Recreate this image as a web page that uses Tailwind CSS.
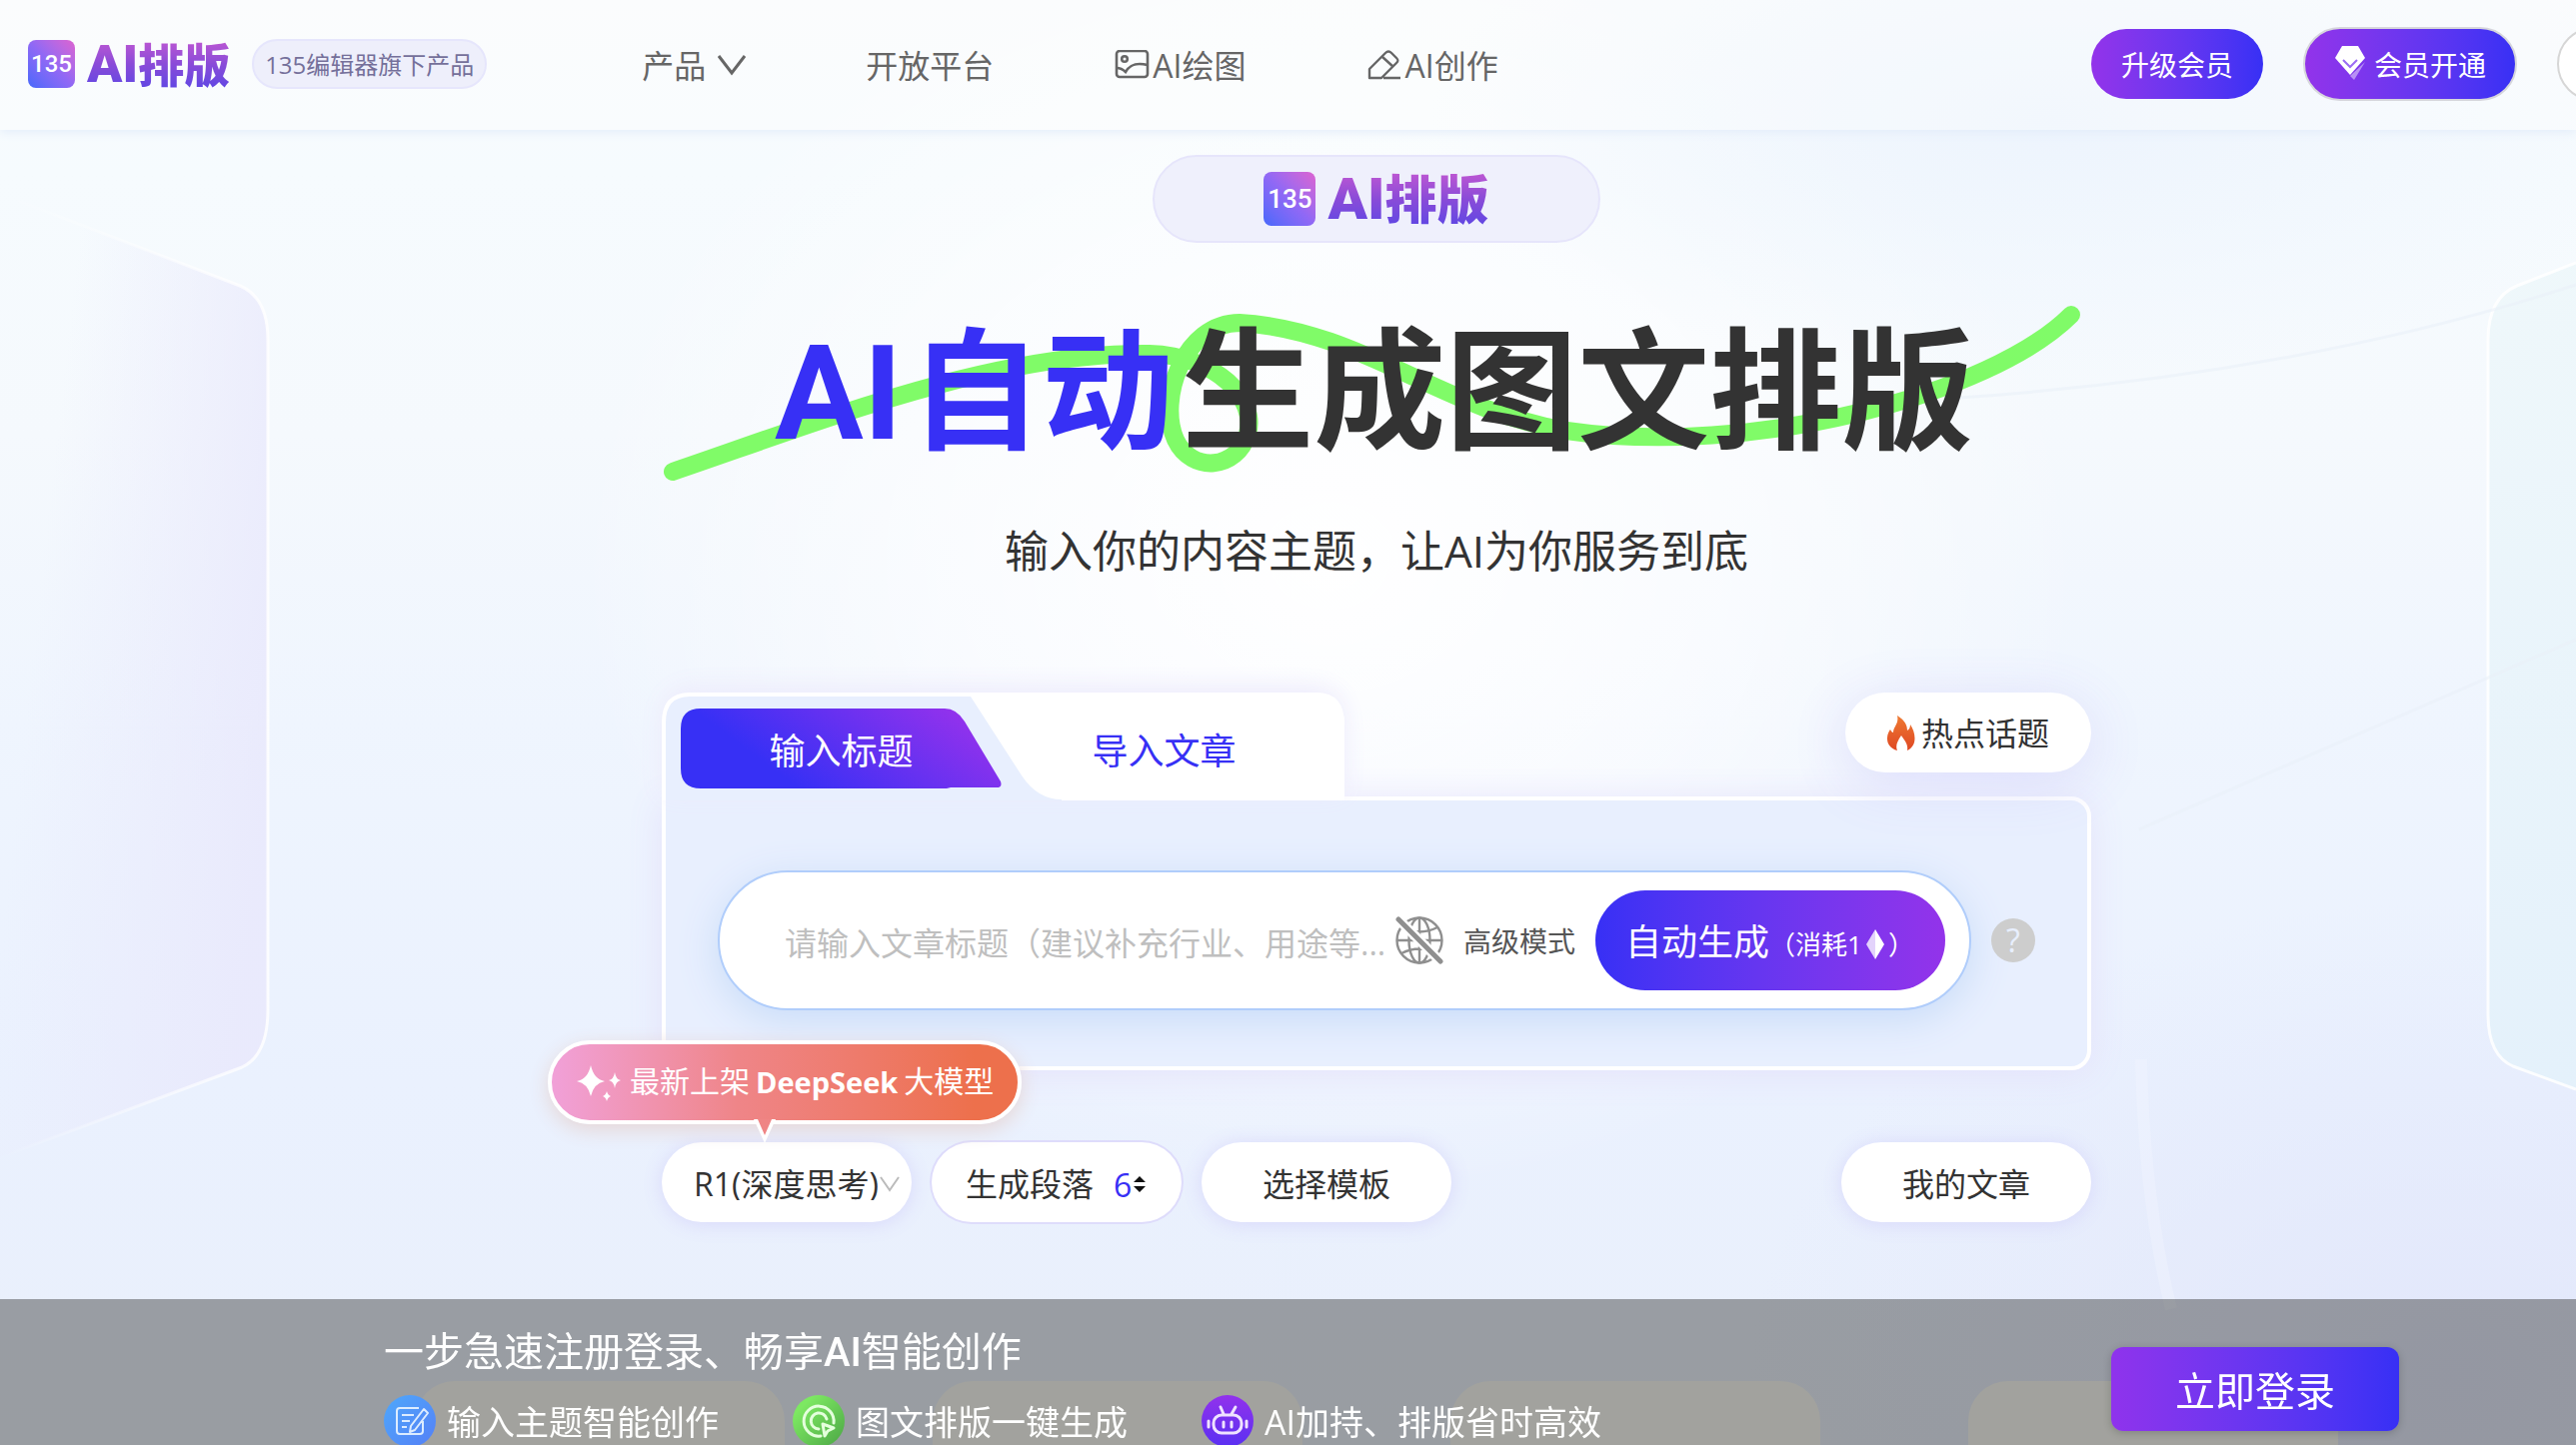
<!DOCTYPE html>
<html lang="zh-CN">
<head>
<meta charset="utf-8">
<meta name="viewport" content="width=device-width, initial-scale=1">
<title>135 AI排版</title>
<script src="https://cdn.jsdelivr.net/npm/@tailwindcss/browser@4"></script>
</head>
<body class="relative h-screen overflow-hidden bg-[#f3f8fe] font-['Open_Sans','Noto_Sans_CJK_SC',sans-serif] text-[#333333]">

<!-- page backdrop -->
<svg class="absolute inset-0 -z-10 h-full w-full" viewBox="0 0 2577 1446" preserveAspectRatio="none" fill="none" aria-hidden="true">
  <defs>
    <linearGradient id="sky" x1="0" y1="0" x2="0" y2="1"><stop offset="0" stop-color="#f9fbfd"/><stop offset=".12" stop-color="#f6fbfe"/><stop offset=".3" stop-color="#f5f9fd"/><stop offset=".5" stop-color="#eff5fe"/><stop offset=".75" stop-color="#eaf1fe"/><stop offset="1" stop-color="#e9effb"/></linearGradient>
    <radialGradient id="glow" gradientUnits="userSpaceOnUse" cx="0" cy="0" r="1" gradientTransform="translate(1330 560) scale(760 640)"><stop offset="0" stop-color="#fff"/><stop offset=".5" stop-color="#fff" stop-opacity=".6"/><stop offset="1" stop-color="#fff" stop-opacity="0"/></radialGradient>
    <radialGradient id="dusk" gradientUnits="userSpaceOnUse" cx="0" cy="0" r="1" gradientTransform="translate(2450 1380) scale(700 480)"><stop offset="0" stop-color="#e2e7fb"/><stop offset="1" stop-color="#e2e7fb" stop-opacity="0"/></radialGradient>
    <radialGradient id="haze" gradientUnits="userSpaceOnUse" cx="0" cy="0" r="1" gradientTransform="translate(2050 120) scale(620 260)"><stop offset="0" stop-color="#edf4fd"/><stop offset="1" stop-color="#edf4fd" stop-opacity="0"/></radialGradient>
    <linearGradient id="paneL" x1="0" y1=".2" x2="1" y2=".6"><stop offset=".2" stop-color="#e9e9fc" stop-opacity="0"/><stop offset="1" stop-color="#e9e9fc" stop-opacity=".9"/></linearGradient>
    <linearGradient id="paneR" x1="0" y1="0" x2="0" y2="1"><stop offset="0" stop-color="#edf7fa" stop-opacity=".8"/><stop offset="1" stop-color="#e4f1fb"/></linearGradient>
    <linearGradient id="edgeL" x1="0" y1="0" x2="1" y2="0"><stop offset="0" stop-color="#fff" stop-opacity="0"/><stop offset="1" stop-color="#fff" stop-opacity=".85"/></linearGradient>
  </defs>
  <path fill="url(#sky)" d="M0 0h2577v1446H0z"/>
  <path fill="url(#glow)" d="M0 0h2577v1446H0z"/>
  <path fill="url(#haze)" d="M1400 0h1177v500H1400z"/>
  <path fill="url(#dusk)" d="M1600 800h977v646H1600z"/>
  <path d="M0 194 240 286Q268 298 268 340V1010Q268 1056 242 1068L0 1158" fill="url(#paneL)" stroke="url(#edgeL)" stroke-width="3"/>
  <path d="M2577 263 2518 286Q2489 298 2489 340V1015Q2489 1056 2514 1067L2577 1090" fill="url(#paneR)" stroke="#fff" stroke-opacity=".85" stroke-width="3"/>
  <path d="M1960 398Q2300 375 2577 285M2140 830 2577 640" stroke="#eaf0f8" stroke-opacity=".6" stroke-width="3"/>
  <path d="M2142 1060Q2145 1200 2172 1310" stroke="#f4f7fe" stroke-opacity=".35" stroke-width="12"/>
</svg>

<header class="flex h-[130px] items-center overflow-hidden bg-white/30 pb-0.5 pl-7 shadow-[0_2px_10px_#e2ecfa]">
  <a href="#" class="flex items-center gap-3" aria-label="135 AI排版">
    <span class="flex h-12 w-[47px] items-center justify-center rounded-lg bg-linear-to-tr from-[#4568fb] via-[#9068f5] to-[#dd62d0] font-['Roboto'] text-2xl leading-none font-medium text-white">135</span>
    <span class="block bg-linear-to-b from-[#cf58d0] via-[#8a4bd8] to-[#5243e6] bg-clip-text pb-1 font-['Noto_Sans_CJK_SC',sans-serif] text-[46px] leading-[60px] font-black whitespace-nowrap text-transparent"><span class="font-['Roboto'] text-[52px] leading-none">AI</span>排版</span>
  </a>
  <span class="ml-[22px] flex h-[50px] items-center rounded-full border-2 border-[#e6e6fc] bg-[#eeeffb] px-[11px] pt-0.5 text-2xl leading-none whitespace-nowrap text-[#75709a]">135编辑器旗下产品</span>
  <nav class="ml-[155px] flex items-center gap-[120px] pt-1 text-[32px] leading-none whitespace-nowrap text-[#666666]">
    <a href="#" class="flex items-center gap-3">产品
      <svg class="h-7 w-7" viewBox="0 0 28 28" fill="none" stroke="currentColor" stroke-width="3"><path d="M1 4l13 17L27 4"/></svg></a>
    <a href="#">开放平台</a>
    <a href="#" class="flex items-center gap-[3px]">
      <svg class="h-8 w-9" viewBox="0 0 36 32" fill="none" stroke="currentColor" stroke-width="2.6"><rect x="3" y="1" width="31" height="26" rx="3"/><circle cx="11" cy="9" r="2.8"/><path d="M3 18c4 0 6 1 9 4 4-7 10-10 22-7"/></svg>AI绘图</a>
    <a href="#" class="flex items-center gap-[3px]">
      <svg class="h-8 w-9" viewBox="0 0 36 32" fill="none" stroke="currentColor" stroke-width="2.4" stroke-linejoin="round"><path d="M3 28v-9L19 3c2-2 4-2 6 0l5 5c2 2 2 3 0 5L15 28zM17 28h17M16 7l11 10"/></svg>AI创作</a>
  </nav>
  <div class="ml-auto -mr-[55px] flex shrink-0 items-center gap-10 text-[28px] leading-none whitespace-nowrap text-white">
    <button class="h-[70px] w-[172px] rounded-full bg-linear-to-r from-[#9333ea] to-[#3730f5] pt-0.5">升级会员</button>
    <button class="flex h-[74px] w-[214px] items-center justify-center gap-2 rounded-full border-2 border-[#d6d6dc] bg-linear-to-r from-[#9333ea] to-[#3730f5] bg-origin-border">
      <svg class="h-9 w-8" viewBox="0 0 32 36"><path d="M31 16 20 34l-4-4z" fill="#fff" opacity=".45"/><path d="M8 0h16l7 12-15 17L1 12z" fill="#fff"/><path d="M9 14l7 7 7-7" fill="none" stroke="#9b6bf3" stroke-width="2"/></svg><span class="pt-0.5">会员开通</span></button>
    <button class="h-[74px] w-[74px] rounded-full border-2 border-[#d6d6d6] bg-white" aria-label="用户"></button>
  </div>
</header>

<main class="flex flex-col items-center pt-[25px] pl-[177px]">
  <div class="flex h-[88px] w-[448px] items-center justify-center gap-3 rounded-full border-2 border-[#e6e5fb] bg-[#eff0fc]">
    <span class="flex h-[54px] w-[52px] items-center justify-center rounded-lg bg-linear-to-tr from-[#4568fb] via-[#9068f5] to-[#dd62d0] font-['Roboto'] text-[26px] leading-none font-medium text-white">135</span>
    <span class="block bg-linear-to-b from-[#cf58d0] via-[#8a4bd8] to-[#5243e6] bg-clip-text pb-1 font-['Noto_Sans_CJK_SC',sans-serif] text-[52px] leading-[66px] font-black whitespace-nowrap text-transparent"><span class="font-['Roboto'] text-[58px] leading-none">AI</span>排版</span>
  </div>

  <div class="relative mt-[79px] h-[132px] w-[1430px]">
    <svg class="absolute -top-8 left-0 h-[200px] w-[1430px]" viewBox="0 0 1430 200" fill="none" stroke="#80fb68" stroke-width="18" stroke-linecap="round" aria-hidden="true"><path d="M11 182C150 135 330 62 488 64C556 66 596 110 586 144C576 180 530 184 514 150C496 110 522 33 578 33C700 40 780 120 905 141C1090 168 1330 105 1410 25"/></svg>
    <h1 class="relative pl-[113px] text-[132px] leading-none font-bold whitespace-nowrap"><span class="text-[#3730f5]"><span class="mr-2 font-['Roboto']">AI</span>自动</span><span class="ml-2">生成图文排版</span></h1>
  </div>
  <p class="mt-[75px] text-[44px] leading-none">输入你的内容主题，让AI为你服务到底</p>

  <section class="mt-[120px] w-[1430px]">
    <div class="relative z-10 -mb-1 flex h-[108px] items-start justify-between">
      <div class="relative flex h-[108px] w-[683px] rounded-t-[30px] pt-4 pl-[19px] shadow-[0_-6px_24px_#edebfc]" role="tablist">
        <svg class="absolute inset-0 h-full w-full" viewBox="0 0 683 108" aria-hidden="true"><path fill="#fff" d="M0 108V30Q0 0 28 0H655Q683 0 683 32V108z"/><path fill="#e8effe" d="M4 108V30Q4 4 28 4H309L360 83Q376 107 400 107V108z"/></svg>
        <button role="tab" aria-selected="true" class="relative h-20 w-[321px] pt-1.5 text-4xl leading-none text-white">
          <svg class="absolute inset-0 h-full w-full" viewBox="0 0 321 80" aria-hidden="true"><defs><linearGradient id="tab" x1=".05" y1=".5" x2=".95" y2=".2"><stop offset=".15" stop-color="#3730f5"/><stop offset="1" stop-color="#9632ec"/></linearGradient></defs><path fill="url(#tab)" d="M20 0H264Q276 0 284 13L320 73Q322 79 316 79H270L266 80H20Q0 80 0 60V20Q0 0 20 0z"/></svg>
          <span class="relative">输入标题</span>
        </button>
        <button role="tab" aria-selected="false" class="relative h-20 w-[325px] pt-1.5 text-4xl leading-none text-[#3730f5]">导入文章</button>
      </div>
      <button class="flex h-20 w-[246px] items-center justify-center gap-1.5 rounded-full bg-white pt-0.5 text-[32px] leading-none shadow-[0_10px_60px_#dcdcfb]">
        <svg class="h-9 w-7" viewBox="0 0 28 36"><defs><linearGradient id="fire" x1="0" y1="0" x2="0" y2="1"><stop stop-color="#ee7a32"/><stop offset="1" stop-color="#df4823"/></linearGradient></defs><path fill="url(#fire)" d="M10 0C18 5 20 10 20 15c2-1 3-3 3-6 5 7 8 21-3 26 1-6-2-9-6-15-4 6-6 10-4 15C-3 31-1 19 3 14c1 2 2 3 3 3C6 11 12 8 10 0z"/></svg>热点话题</button>
    </div>

    <div class="flex items-center gap-5 rounded-[20px] rounded-tl-none border-4 border-white bg-[#e8effe] px-[52px] pt-[70px] pb-14 shadow-[0_4px_36px_#e4e2fb]">
      <form class="flex h-[140px] flex-1 items-center gap-5 rounded-full border-2 border-[#b0cdfb] bg-white pr-[24px] pl-[65px] shadow-[0_10px_40px_#c8dcf8]">
        <input type="text" aria-label="文章标题" placeholder="请输入文章标题（建议补充行业、用途等..." class="h-20 min-w-0 flex-1 pt-1 text-[32px] outline-none placeholder:text-[#bfbfbf]">
        <button type="button" class="-ml-2.5 flex items-center gap-5 text-[28px] leading-none whitespace-nowrap text-[#555555]">
          <svg class="h-12 w-12" viewBox="0 0 48 48" fill="none" stroke="#8f8f8f" stroke-width="2.4"><circle cx="24" cy="24" r="22.5"/><ellipse cx="24" cy="24" rx="10.5" ry="22.5"/><path d="M24 1v46M1 24h46M6 11q18 9 36 0M6 37q18-9 36 0"/><path d="M3 3l42 42" stroke="#fff" stroke-width="10"/><path d="M3 3l42 42" stroke-width="5" stroke-linecap="round"/></svg><span class="pt-0.5">高级模式</span></button>
        <button type="button" class="flex h-[100px] w-[350px] items-center rounded-full bg-linear-to-r from-[#3730f5] to-[#9333ea] pt-1 pl-[30px] text-4xl leading-none whitespace-nowrap text-white">自动生成<span class="flex items-center pt-1 text-[26px]">（消耗1<svg class="mx-1 h-[30px] w-[18px]" viewBox="0 0 18 30"><path fill="#fff" d="M9 0l9 15-9 15z"/><path fill="#e3d3fb" d="M9 0 0 15l9 15z"/></svg>）</span></button>
      </form>
      <button aria-label="帮助" class="h-11 w-11 rounded-full bg-[#cdcdcd] text-[32px] leading-none text-[#e8effe]">?</button>
    </div>

    <div class="relative mt-[72px] flex gap-5 text-[32px] leading-none whitespace-nowrap">
      <div class="relative">
        <select aria-label="模型" class="h-20 w-[250px] appearance-none rounded-full bg-white pt-1 pl-8 shadow-[0_2px_20px_#d8d8fb]"><option>R1(深度思考)</option></select>
        <svg class="pointer-events-none absolute top-8 right-3 h-5 w-5" viewBox="0 0 20 20" fill="none" stroke="#bbbbbb" stroke-width="2"><path d="M1 3l9 13 9-13"/></svg>
      </div>
      <label class="flex h-20 w-[250px] items-center rounded-full bg-white pt-1 pl-[34px] ring-2 ring-[#dedcfb]">生成段落
        <input type="text" value="6" class="ml-5 w-5 text-[#3730f5] outline-none">
        <svg class="h-4 w-3" viewBox="0 0 12 16" fill="#111111"><path d="M6 0l6 6H0zM6 16l6-6H0z"/></svg></label>
      <button class="h-20 w-[250px] rounded-full bg-white pt-1 shadow-[0_2px_20px_#d8d8fb]">选择模板</button>
      <button class="ml-auto h-20 w-[250px] rounded-full bg-white pt-1 shadow-[0_2px_20px_#d8d8fb]">我的文章</button>

      <!-- promo bubble above the model picker -->
      <div class="absolute -top-[102px] -left-[114px] flex h-[84px] items-center rounded-full border-4 border-white bg-linear-to-r from-[#f1a1da] via-[#ef8588] via-40% to-[#ed704c] to-90% bg-origin-border px-6 pb-0.5 text-[30px] text-white shadow-[0_6px_20px_#e6d6d6]">
        <svg class="mr-2 h-14 w-[46px]" viewBox="0 0 46 56" fill="#fff"><path d="M15 12q3 14 14 16-11 2-14 15-3-13-14-15 11-2 14-16zM39 19q1 7 6 8-5 1-6 8-1-7-6-8 5-1 6-8zM31 38q1 4 4 5-3 1-4 5-1-4-4-5 3-1 4-5z"/></svg>
        最新上架<strong class="mx-1.5 text-[29px] font-bold">DeepSeek</strong>大模型
        <svg class="absolute top-[75px] left-[202px] h-6 w-[22px]" viewBox="0 0 22 24"><path fill="#fff" d="M0 0h22L11 24z"/><path fill="#ef8585" d="M4 0h14l-7 16z"/></svg>
      </div>
    </div>
  </section>

  <div class="mt-[159px] flex shrink-0 gap-[148px]" aria-hidden="true">
    <div class="h-[200px] w-[370px] rounded-[40px] bg-[#f7f8f4]"></div>
    <div class="h-[200px] w-[370px] rounded-[40px] bg-[#f7f8f4]"></div>
    <div class="h-[200px] w-[370px] rounded-[40px] bg-[#f7f8f4]"></div>
    <div class="h-[200px] w-[370px] rounded-[40px] bg-[#f7f8f4]"></div>
  </div>
</main>

<aside class="fixed inset-x-0 bottom-0 z-20 flex h-[146px] items-start justify-between overflow-hidden bg-[#0c0c06]/36 pr-[177px] pl-[384px] whitespace-nowrap text-white">
  <div class="pt-8">
    <h2 class="h-10 text-[40px] leading-none">一步急速注册登录、畅享<span class="font-['Roboto'] font-medium">AI</span>智能创作</h2>
    <ul class="mt-6 flex gap-[74px] text-[34px] leading-none">
      <li class="flex items-center gap-[11px]"><svg class="h-[52px] w-[52px]" viewBox="0 0 52 52" fill="none" stroke="#dcecff" stroke-width="2" stroke-linejoin="round"><defs><linearGradient id="fa" x1="0" y1="0" x2="1" y2="1"><stop stop-color="#4fa8fb"/><stop offset="1" stop-color="#5580f6"/></linearGradient></defs><circle cx="26" cy="26" r="26" fill="url(#fa)" stroke="none"/><path d="M35 13H16q-3 0-3 3v20q0 3 3 3h20q3 0 3-3V26M18 20h12M18 26h8M18 32h5M40 14l4 4-13 17-5 2 1-6z"/></svg><span class="pt-0.5">输入主题智能创作</span></li>
      <li class="flex items-center gap-[11px]"><svg class="h-[52px] w-[52px]" viewBox="0 0 52 52" fill="none" stroke="#e4ffdc" stroke-width="3" stroke-linecap="round" stroke-linejoin="round"><defs><linearGradient id="fb" x1="0" y1="0" x2="1" y2="1"><stop offset=".2" stop-color="#7de862"/><stop offset="1" stop-color="#4ba545"/></linearGradient></defs><circle cx="26" cy="26" r="26" fill="url(#fb)" stroke="none"/><path d="M41 28a15 15 0 1 0-13 13M34 24a8 8 0 1 0-8 10M30 29l11 4-6 3-3 5z"/></svg><span class="pt-0.5">图文排版一键生成</span></li>
      <li class="flex items-center gap-[11px]"><svg class="h-[52px] w-[52px]" viewBox="0 0 52 52" fill="none" stroke="#efe2ff" stroke-width="3" stroke-linecap="round"><defs><linearGradient id="fc" x1="0" y1="0" x2="0" y2="1"><stop stop-color="#9232ec"/><stop offset="1" stop-color="#5a30f2"/></linearGradient></defs><circle cx="26" cy="26" r="26" fill="url(#fc)" stroke="none"/><rect x="12" y="20" width="28" height="18" rx="8"/><path d="M22 19l-3-7M30 19l4-7M22 27v5M30 27v5M7 26v6M45 26v6"/></svg><span class="pt-0.5">AI加持、排版省时高效</span></li>
    </ul>
  </div>
  <button class="mt-12 h-[84px] w-[288px] rounded-xl bg-linear-to-r from-[#8f33ec] to-[#3730f5] pt-1 text-[40px] leading-none shadow-[0_2px_8px_#0003]">立即登录</button>
</aside>
</body>
</html>
